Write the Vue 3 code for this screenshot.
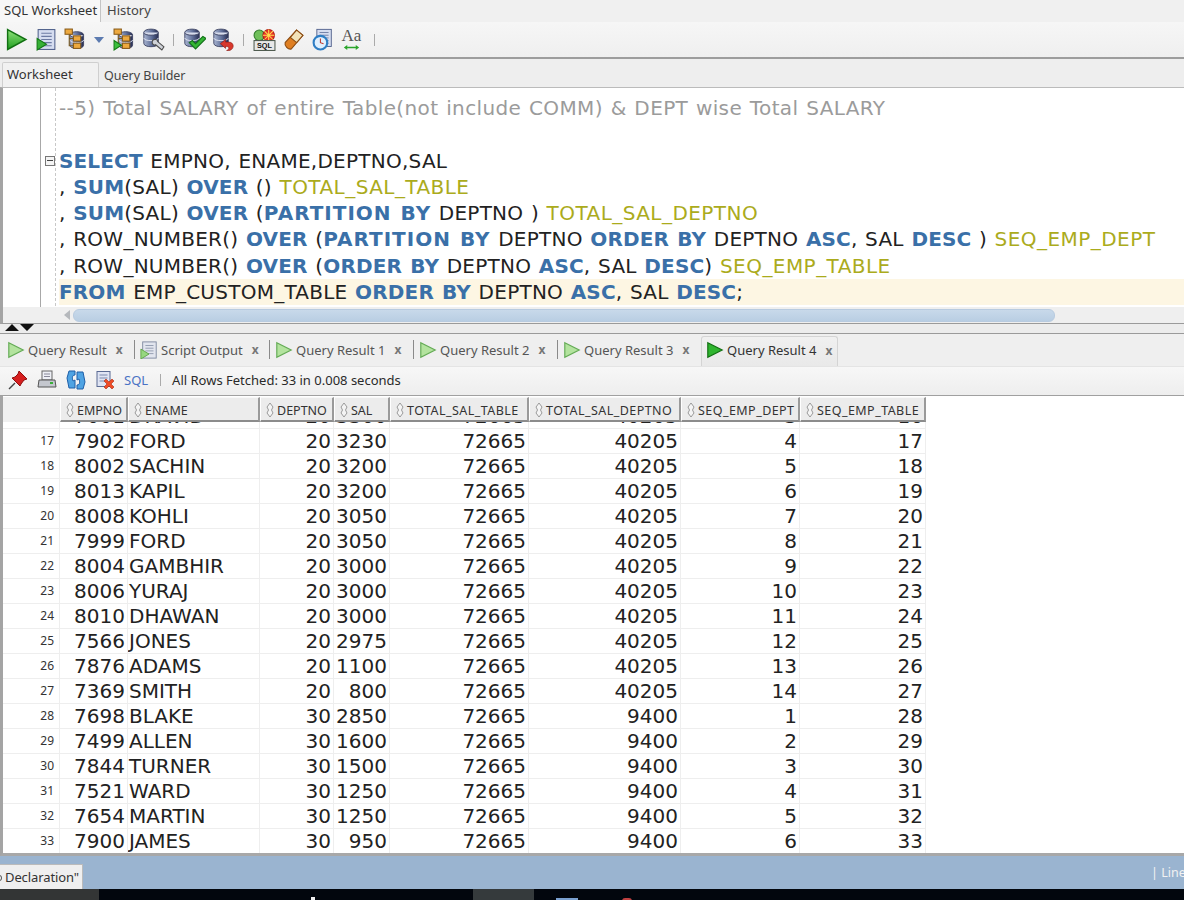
<script setup>
const sqlLines = [
  [['c', '--5) Total SALARY of entire Table(not include COMM) & DEPT wise Total SALARY']],
  [],
  [['k', 'SELECT'], ['t', ' EMPNO, ENAME,DEPTNO,SAL']],
  [['t', ', '], ['k', 'SUM'], ['t', '(SAL) '], ['k', 'OVER'], ['t', ' () '], ['a', 'TOTAL_SAL_TABLE']],
  [['t', ', '], ['k', 'SUM'], ['t', '(SAL) '], ['k', 'OVER'], ['t', ' ('], ['k p', 'PARTITION BY'], ['t', ' DEPTNO ) '], ['a', 'TOTAL_SAL_DEPTNO']],
  [['t', ', ROW_NUMBER() '], ['k', 'OVER'], ['t', ' ('], ['k p', 'PARTITION BY'], ['t', ' DEPTNO '], ['k', 'ORDER BY'], ['t', ' DEPTNO '], ['k', 'ASC'], ['t', ', SAL '], ['k', 'DESC'], ['t', ' ) '], ['a', 'SEQ_EMP_DEPT']],
  [['t', ', ROW_NUMBER() '], ['k', 'OVER'], ['t', ' ('], ['k', 'ORDER BY'], ['t', ' DEPTNO '], ['k', 'ASC'], ['t', ', SAL '], ['k', 'DESC'], ['t', ') '], ['a', 'SEQ_EMP_TABLE']],
  [['k', 'FROM'], ['t', ' EMP_CUSTOM_TABLE '], ['k', 'ORDER BY'], ['t', ' DEPTNO '], ['k', 'ASC'], ['t', ', SAL '], ['k', 'DESC'], ['t', ';']],
]
const tabs = ['Query Result', 'Script Output', 'Query Result 1', 'Query Result 2', 'Query Result 3', 'Query Result 4']
const cols = ['EMPNO', 'ENAME', 'DEPTNO', 'SAL', 'TOTAL_SAL_TABLE', 'TOTAL_SAL_DEPTNO', 'SEQ_EMP_DEPT', 'SEQ_EMP_TABLE']
const rows = [
  [16, 7001, 'DRAVID', 20, 3300, 72665, 40205, 3, 16],
  [17, 7902, 'FORD', 20, 3230, 72665, 40205, 4, 17],
  [18, 8002, 'SACHIN', 20, 3200, 72665, 40205, 5, 18],
  [19, 8013, 'KAPIL', 20, 3200, 72665, 40205, 6, 19],
  [20, 8008, 'KOHLI', 20, 3050, 72665, 40205, 7, 20],
  [21, 7999, 'FORD', 20, 3050, 72665, 40205, 8, 21],
  [22, 8004, 'GAMBHIR', 20, 3000, 72665, 40205, 9, 22],
  [23, 8006, 'YURAJ', 20, 3000, 72665, 40205, 10, 23],
  [24, 8010, 'DHAWAN', 20, 3000, 72665, 40205, 11, 24],
  [25, 7566, 'JONES', 20, 2975, 72665, 40205, 12, 25],
  [26, 7876, 'ADAMS', 20, 1100, 72665, 40205, 13, 26],
  [27, 7369, 'SMITH', 20, 800, 72665, 40205, 14, 27],
  [28, 7698, 'BLAKE', 30, 2850, 72665, 9400, 1, 28],
  [29, 7499, 'ALLEN', 30, 1600, 72665, 9400, 2, 29],
  [30, 7844, 'TURNER', 30, 1500, 72665, 9400, 3, 30],
  [31, 7521, 'WARD', 30, 1250, 72665, 9400, 4, 31],
  [32, 7654, 'MARTIN', 30, 1250, 72665, 9400, 5, 32],
  [33, 7900, 'JAMES', 30, 950, 72665, 9400, 6, 33],
]
</script>

<template>
  <div class="page">
    <svg class="defs" aria-hidden="true">
      <defs>
        <linearGradient id="gp" x1="0" y1="0" x2="0" y2="1">
          <stop offset="0" stop-color="#8fe37a" /><stop offset="1" stop-color="#1f9e1f" />
        </linearGradient>
        <linearGradient id="gd" x1="0" y1="0" x2="1" y2="0">
          <stop offset="0" stop-color="#aab6d2" /><stop offset="0.55" stop-color="#5f6e98" /><stop offset="1" stop-color="#262d52" />
        </linearGradient>
        <symbol id="db" viewBox="0 0 22 22">
          <path d="M2 5c0-5 16-5 16 0v12c0 5-16 5-16 0z" fill="url(#gd)" stroke="#3a4060" />
          <path d="M2 5c0 4 16 4 16 0" fill="#d7dcec" stroke="#3a4060" />
          <path d="M2 11c0 4 16 4 16 0" fill="none" stroke="#e4e8f4" />
        </symbol>
        <symbol id="doc" viewBox="0 0 22 22">
          <rect x="3" y="1.500" width="16" height="19" fill="#d6ddf0" stroke="#4f5f8a" />
          <path d="M6 5h10M6 8h10M6 11h10M6 14h10M6 17h10" stroke="#6d7ba3" />
        </symbol>
        <symbol id="treedb" viewBox="0 0 22 22">
          <use href="#db" x="4" y="2" width="18" height="19" />
          <path d="M5 5v12h6M5 10h6" fill="none" stroke="#7a5a20" />
          <rect x="1" y="1" width="7" height="5" fill="#eda93f" stroke="#8a5b17" />
          <rect x="9" y="7.500" width="7" height="5" fill="#eda93f" stroke="#8a5b17" />
          <rect x="9" y="14.500" width="7" height="5" fill="#eda93f" stroke="#8a5b17" />
        </symbol>
      </defs>
    </svg>

    <div class="top-tabs">
      <span class="top-tab active">SQL Worksheet</span>
      <span class="top-tab">History</span>
    </div>

    <div class="toolbar">
      <svg class="ic22 play-ic" viewBox="0 0 22 22"><path d="M2.500 1.500L20 11 2.500 20.500z" fill="url(#gp)" stroke="#127012" stroke-width="1.400" /></svg>
      <svg class="ic22" viewBox="0 0 22 22"><use href="#doc" /><path d="M2 10l9 5.500L2 21z" fill="#37b037" stroke="#147a14" /></svg>
      <svg class="ic22" viewBox="0 0 22 22"><use href="#treedb" /></svg>
      <svg class="caret" viewBox="0 0 10 6"><path d="M0 0h10L5 6z" fill="#5c7bb0" /></svg>
      <svg class="ic22" viewBox="0 0 22 22"><use href="#treedb" /><path d="M1 12l7 4.500-7 4.500z" fill="#3cc03c" stroke="#147a14" /></svg>
      <svg class="ic22" viewBox="0 0 22 22"><use href="#db" width="19" height="19" /><path d="M10 12c2-2 5-1 5 1l6 5-2 3-6-5c-2 1-4-1-3-4z" fill="#cfd2d8" stroke="#4d4d4d" /></svg>
      <i class="sep"></i>
      <svg class="ic22" viewBox="0 0 22 22"><use href="#db" width="19" height="19" /><path d="M6 14l3-2 3 3 7-7 3 2-10 10z" fill="#35b535" stroke="#12701a" /></svg>
      <svg class="ic22" viewBox="0 0 22 22"><use href="#db" width="19" height="19" /><path d="M8 15l5-4v2.500h3c5 0 6 6 1 8h-3c3-1 3-4-1-4h0v2z" fill="#d8382c" stroke="#8c1a14" stroke-width=".6" /></svg>
      <i class="sep"></i>
      <svg class="ic22" viewBox="0 0 22 22">
        <circle cx="6" cy="7" r="5" fill="#6fbf5a" stroke="#2f7a2a" />
        <circle cx="15" cy="7" r="5.500" fill="#e8342a" stroke="#b01e18" />
        <path d="M15 1.500v11M9.500 7h11M11 3l8 8M19 3l-8 8" stroke="#ffe14d" />
        <rect x="1" y="12" width="20" height="9.500" fill="#e8e8e8" stroke="#4f5b4f" />
        <text x="11" y="19.500" text-anchor="middle" class="sql-txt">SQL</text>
      </svg>
      <svg class="ic22" viewBox="0 0 22 22">
        <path d="M14 2l6 5-11 13c-3 1-7-3-6-6z" fill="#df7f22" stroke="#8a4a10" />
        <path d="M14 2l6 5-6 7-6-5z" fill="#f2e2b8" stroke="#8a4a10" />
      </svg>
      <svg class="ic22" viewBox="0 0 22 22">
        <use href="#doc" x="3" y="0" width="19" height="19" />
        <circle cx="9" cy="14" r="6.500" fill="#dff0ff" stroke="#2f7ec4" stroke-width="2" />
        <path d="M9 10v4l3 1" fill="none" stroke="#c0392b" />
      </svg>
      <span class="font-ic">
        <span class="aa">Aa</span>
        <svg viewBox="0 0 20 7" class="lr"><path d="M1 3.500l4-3v2h10v-2l4 3-4 3v-2H5v2z" fill="#2aa52a" /></svg>
      </span>
      <i class="sep last"></i>
    </div>

    <div class="sub-tabs">
      <span class="sub-tab active">Worksheet</span>
      <span class="sub-tab">Query Builder</span>
    </div>

    <div class="editor">
      <div class="gutter"><i class="fold"></i></div>
      <div class="code">
        <div v-for="(line, i) in sqlLines" :key="i" class="code-line" :class="{ current: i === 7 }">
          <span v-for="(tok, j) in line" :key="j" :class="tok[0]">{{ tok[1] }}</span>
        </div>
      </div>
    </div>
    <div class="hscroll">
      <svg class="sc-arrow" viewBox="0 0 6 10"><path d="M6 0v10L0 5z" fill="#b5b8bc" /></svg>
      <div class="thumb"></div>
    </div>
    <div class="splitter">
      <svg viewBox="0 0 29 7" class="split-ic"><path d="M0 7l7-7 7 7zM15 0h14l-7 7z" fill="#111" /></svg>
    </div>

    <div class="res-tabs">
      <span v-for="(t, i) in tabs" :key="t" class="res-tab" :class="{ active: i === 5 }">
        <svg v-if="i === 1" class="tab-ic" viewBox="0 0 20 20"><rect x="3" y="1" width="15" height="18" fill="#e2e5ee" stroke="#7d879e" /><path d="M6 5h9M6 8h9M6 11h9M6 14h9" stroke="#8f98ad" /><path d="M1 9l9 5.500L1 20z" fill="#96d77f" stroke="#5fa348" /></svg>
        <svg v-else class="tab-ic" viewBox="0 0 20 20"><path d="M2 2l16 8-16 8z" :fill="i === 5 ? '#2fb52f' : '#b3e39e'" :stroke="i === 5 ? '#127012' : '#64ab55'" stroke-width="1.300" /></svg>
        <span>{{ t }}</span>
        <span class="x">x</span>
      </span>
    </div>

    <div class="res-bar">
      <svg class="ic20" viewBox="0 0 20 20"><path d="M1 19l6-6" stroke="#444" stroke-width="1.500" /><path d="M11 1l8 8-3 1-3 4-1 2-8-8 3-1 3-3z" fill="#d61f1f" stroke="#8f0f0f" /></svg>
      <svg class="ic20" viewBox="0 0 20 20"><rect x="5" y="1" width="10" height="9" fill="#eef0f6" stroke="#666" /><path d="M7 4h6M7 6.500h6" stroke="#889" /><path d="M2 10h16l1 7H1z" fill="#c4c7ce" stroke="#555" /><rect x="13" y="12" width="3" height="2" fill="#3ab03a" /></svg>
      <svg class="ic20" viewBox="0 0 20 20"><path d="M3 1h6v4C6 5 6 8 7 11l2-1v8H3L1 8z" fill="#4fa3e3" stroke="#1f5fa8" /><path d="M17 19h-6v-4c3 0 3-3 2-6l-2 1V2h6l2 10z" fill="#4fa3e3" stroke="#1f5fa8" /></svg>
      <svg class="ic20" viewBox="0 0 20 20"><rect x="2" y="1.500" width="13" height="15" fill="#dfe4f3" stroke="#5b6b94" /><path d="M4.500 5h8M4.500 8h8M4.500 11h8" stroke="#7b89ad" /><path d="M9 11l2-2 3 3 3-3 2 2-3 3 3 3-2 2-3-3-3 3-2-2 3-3z" fill="#ef4b26" stroke="#a82a10" stroke-width=".6" /></svg>
      <span class="sql-link">SQL</span>
      <i class="bar-sep"></i>
      <span class="fetched">All Rows Fetched: 33 in 0.008 seconds</span>
    </div>

    <div class="grid-wrap">
      <div class="grid-head">
        <span class="corner"></span>
        <span v-for="c in cols" :key="c" class="hcell" :class="{ wide: c.includes('_') }">
          <svg class="sort" viewBox="0 0 8 16"><path d="M4 1L7 5 5.500 8 7 11 4 15 1 11 2.500 8 1 5z" fill="#f4f4f4" stroke="#9a9a9a" /></svg>
          {{ c }}
        </span>
      </div>
      <div class="grid-body">
        <div class="rows">
          <div v-for="r in rows" :key="r[0]" class="row">
            <span class="num">{{ r[0] }}</span>
            <span v-for="(v, k) in r.slice(1)" :key="k" class="cell" :class="{ left: k === 1 }">{{ v }}</span>
          </div>
        </div>
      </div>
    </div>

    <div class="status">
      <span class="decl">Declaration"</span>
      <span class="line-info">| Line</span>
    </div>
    <div class="taskbar">
      <i class="tb-a"></i>
      <i class="tb-w"></i>
      <i class="tb-b"></i>
      <i class="tb-c"></i>
      <i class="tb-d"></i>
    </div>
  </div>
</template>

<style>
html, body { margin: 0; background: #fff; }
</style>

<style scoped>
.page {
  width: 1184px;
  height: 900px;
  overflow: hidden;
  display: flex;
  flex-direction: column;
  background: #f0f0f0;
  color: #333;
  font-family: "Noto Sans", sans-serif;
  font-size: 13px;
}
.defs { display: block; width: 0; height: 0; flex: none; }
i { display: block; }

.top-tabs { height: 22px; flex: none; display: flex; background: #f0f0f0; }
.top-tab { padding: 0 5px; line-height: 20px; font-size: 13px; color: #444; }
.top-tab.active { width: 96px; padding: 0 0 0 4px; margin-right: 1px; color: #333; background: #f7f7f7; border-right: 1px solid #c4c4c4; white-space: nowrap; }

.toolbar { height: 35px; flex: none; display: flex; align-items: center; padding-left: 5px; background: linear-gradient(#f6f6f6, #efefef); }
.ic22 { width: 23px; height: 23px; margin-right: 6px; flex: none; }
.play-ic { margin-right: 7px; }
.caret { width: 10px; height: 6px; margin: 0 9px -1px 1px; flex: none; }
.sep { width: 1px; height: 12px; background: #aaa; margin: 0 9px 0 2px; flex: none; }
.sql-txt { font-family: "Liberation Sans", sans-serif; font-size: 7px; font-weight: 700; fill: #111; }
.font-ic { width: 23px; height: 25px; display: flex; flex-direction: column; align-items: center; flex: none; margin-right: 8px; }
.aa { font-family: "Liberation Serif", serif; font-size: 17px; line-height: 17px; color: #555; }
.lr { width: 17px; height: 7px; }
.last { margin-left: 3px; }

.sub-tabs { height: 28px; flex: none; display: flex; align-items: flex-end; border-top: 2px solid #9d9d9d; padding-left: 2px; background: #eeeeee; }
.sub-tab { font-size: 12.500px; line-height: 22px; color: #444; height: 24px; padding-left: 5px; }
.sub-tab.active { width: 91px; height: 24px; font-size: 13px; padding-left: 4px; color: #333; background: #f1f1f1; border: 1px solid #cfcfcf; border-bottom: 0; border-radius: 2px 2px 0 0; }
.sub-tab:not(.active) { line-height: 26px; }

.editor { height: 219px; flex: none; display: flex; background: #fff; border-left: 3px solid #a4a4a4; border-top: 1px solid #bbb; }
.gutter { width: 37px; position: relative; border-right: 1px solid #a8a8a8; flex: none; }
.fold { position: absolute; left: 52px; top: 0; height: 218px; border-left: 1px dashed #c8c8c8; }
.fold::after { content: ""; position: absolute; left: -11px; top: 68px; width: 8px; height: 8px; background: #f4f4f4; border: 1px solid #777; }
.fold::before { content: ""; position: absolute; z-index: 1; left: -9px; top: 72px; width: 6px; height: 1px; background: #444; }
.code { flex: 1; padding: 7px 0 0 18px; min-width: 0; font-family: "DejaVu Sans", sans-serif; font-size: 20px; }
.code-line { height: 26.300px; line-height: 26px; white-space: pre; color: #222; word-spacing: 1px; letter-spacing: .25px; }
.current { background: #fdf6e3; }
.k { font-weight: 700; color: #3a70a8; letter-spacing: .15px; }
.p { letter-spacing: 1px; }
.a { color: #abab1c; letter-spacing: .45px; }
.c { color: #9b9b9b; letter-spacing: .38px; }

.hscroll { height: 17px; flex: none; display: flex; align-items: center; padding-left: 61px; border-left: 3px solid #a4a4a4; background: #efefef; box-sizing: border-box; border-bottom: 1px solid #9a9a9a; }
.sc-arrow { width: 6px; height: 10px; margin-right: 3px; flex: none; }
.thumb { width: 982px; height: 13px; border-radius: 6px; background: linear-gradient(#c8d9ea, #b9cee3); border: 1px solid #b8cbe0; box-sizing: border-box; }

.splitter { height: 9px; flex: none; background: #ececec; border-bottom: 1px solid #9a9a9a; display: flex; align-items: flex-start; padding-left: 5px; }
.split-ic { width: 29px; height: 7px; }

.res-tabs { height: 32px; flex: none; display: flex; align-items: flex-end; padding-left: 7px; background: #efefef; }
.res-tab { display: flex; align-items: center; height: 28px; padding-bottom: 5px; width: 135px; margin-right: 9px; box-sizing: border-box; color: #555; white-space: nowrap; position: relative; font-size: 13px; }
.res-tab + .res-tab::before { content: ""; position: absolute; left: -6px; top: 2px; height: 19px; border-left: 1px solid #8a8a8a; }
.res-tab:nth-child(1) { width: 124px; }
.res-tab:nth-child(2) { width: 126px; }
.tab-ic { width: 18px; height: 18px; margin-right: 3px; flex: none; }
.res-tab .x { margin-left: 9px; font-size: 12px; font-weight: 700; color: #777; }
.res-tab.active { width: 137px; height: 30px; padding-left: 4px; padding-bottom: 3px; margin-left: -6px; margin-right: 0; color: #333; border: 1px solid #d4d4d4; border-bottom: 0; border-radius: 3px 3px 0 0; background: linear-gradient(#f0f0f0, #e9e9e9); }
.res-tab.active::before { display: none; }

.res-bar { height: 30px; flex: none; display: flex; align-items: center; padding: 0 0 2px 8px; background: linear-gradient(#f7f7f7, #eeeeee); border-top: 1px solid #e4e4e4; box-sizing: border-box; border-bottom: 1px solid #a0a0a0; }
.ic20 { width: 20px; height: 20px; margin-right: 9px; flex: none; }
.sql-link { color: #4a72c4; font-size: 13px; }
.bar-sep { width: 1px; height: 12px; background: #aaa; margin: 0 11px 0 12px; flex: none; }
.fetched { font-size: 13px; color: #2a2a2a; white-space: nowrap; }

.grid-wrap { flex: none; height: 460px; background: #fff; border-left: 3px solid #a4a4a4; border-bottom: 3px solid #a8a8a8; box-sizing: border-box; display: flex; flex-direction: column; }
.grid-head, .row { display: grid; grid-template-columns: 57px 68px 132px 74px 56px 139px 152px 119px 126px; width: 923px; }
.grid-head { height: 25px; flex: none; background: #f0f0f0; margin-top: 1px; }
.corner { background: #f0f0f0; }
.hcell { display: flex; align-items: center; gap: 3px; padding: 2px 0 0 5px; background: #ececec; border-top: 1px solid #f8f8f8; border-left: 1px solid #fff; border-right: 2px solid #9a9a9a; border-bottom: 2px solid #8c8c8c; box-sizing: border-box; color: #333; font-size: 12.500px; white-space: nowrap; overflow: hidden; }
.hcell.wide { letter-spacing: .45px; }
.sort { width: 8px; height: 16px; flex: none; }
.grid-body { flex: 1; min-height: 0; overflow: hidden; }
.rows { margin-top: -19px; }
.row { height: 25px; font-family: "DejaVu Sans", sans-serif; font-size: 20px; color: #222; }
.num { border-right: 1px solid #eeeeee; border-bottom: 1px solid #eeeeee; box-sizing: border-box; text-align: right; padding-right: 5px; font-family: "Noto Sans", sans-serif; font-size: 12px; line-height: 25px; color: #333; }
.cell { box-sizing: border-box; text-align: right; padding-right: 2px; line-height: 26px; border-right: 1px solid #eeeeee; border-bottom: 1px solid #eeeeee; white-space: nowrap; overflow: hidden; }
.cell.left { text-align: left; padding: 0 0 0 1px; }

.status { height: 33px; flex: none; display: flex; justify-content: space-between; align-items: center; background: #9ab4d0; }
.decl { align-self: flex-end; width: 83px; height: 25px; box-sizing: border-box; padding-left: 5px; line-height: 25px; background: #efefef; border: 1px solid #bbb; border-bottom: 0; border-left: 0; color: #333; font-size: 13px; letter-spacing: -.1px; position: relative; }
.decl::before { content: ""; position: absolute; left: -3px; top: 10px; width: 5px; height: 6px; border: 1px solid #555; border-radius: 50%; box-sizing: border-box; }
.line-info { width: 33px; overflow: hidden; white-space: pre; color: #f2f2f2; font-size: 12.500px; }

.taskbar { flex: 1; position: relative; background: #02060d; }
.tb-a { position: absolute; left: 0; top: 0; width: 99px; height: 100%; background: #333535; }
.tb-w { position: absolute; left: 311px; top: 8px; width: 4px; height: 4px; background: #eee; }
.tb-b { position: absolute; left: 473px; top: 0; width: 61px; height: 100%; background: #353a3c; }
.tb-c { position: absolute; left: 556px; top: 9px; width: 22px; height: 3px; background: #7aa0d0; }
.tb-d { position: absolute; left: 622px; top: 9px; width: 10px; height: 3px; background: #c04040; border-radius: 5px 5px 0 0; }
</style>
